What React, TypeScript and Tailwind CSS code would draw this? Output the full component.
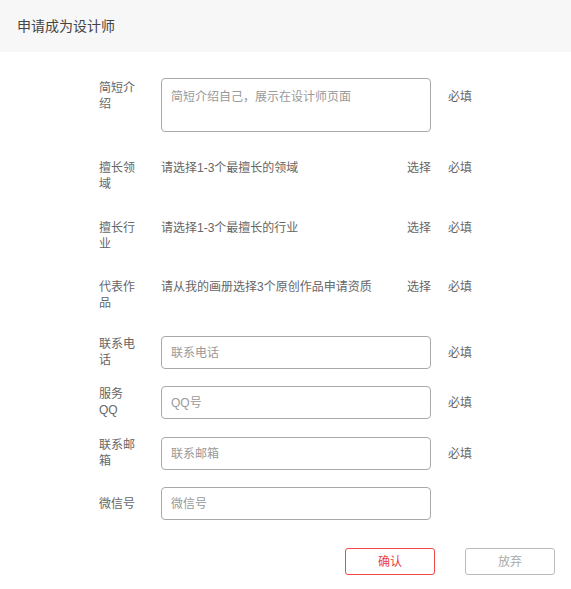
import React from "react";

const font = { fontFamily: '"Liberation Sans", "Noto Sans CJK SC", sans-serif' };

function Label({ children }: { children: React.ReactNode }) {
  return (
    <div className="w-[40px] mr-[22px] shrink-0 text-[12px] leading-[16px] text-[#666] break-words">
      {children}
    </div>
  );
}

function Required() {
  return <div className="ml-[17px] text-[12px] leading-[16px] text-[#666]">必填</div>;
}

function InputRow({ label, placeholder, required, mt, center }: { label: React.ReactNode; placeholder: string; required?: boolean; mt: string; center?: boolean }) {
  return (
    <div className={`flex ${center ? "items-center" : "items-start"} ${mt}`}>
      <Label>{label}</Label>
      <div className="flex items-center">
        <input
          className="w-[270px] h-[33px] border border-[#aaa] rounded-[4px] px-[9px] text-[12px] text-[#333] placeholder:text-[#999] outline-none"
          placeholder={placeholder}
        />
        {required ? <Required /> : null}
      </div>
    </div>
  );
}

function SelectRow({ label, text, mt }: { label: React.ReactNode; text: string; mt: string }) {
  return (
    <div className={`flex items-start ${mt}`}>
      <Label>{label}</Label>
      <div className="w-[270px] flex justify-between text-[12px] leading-[16px] text-[#666]">
        <span>{text}</span>
        <span>选择</span>
      </div>
      <Required />
    </div>
  );
}

export default function App() {
  return (
    <div className="w-[571px] h-[589px] bg-white" style={font}>
      <div className="h-[52px] bg-[#f7f7f7] flex items-center pl-[17px] text-[14px] text-[#444]">
        申请成为设计师
      </div>
      <div className="pl-[99px] pt-[26px]">
        <div className="flex items-start">
          <div className="pt-[2px]">
            <Label>简短介绍</Label>
          </div>
          <textarea
            className="w-[270px] h-[54px] border border-[#aaa] rounded-[4px] pt-[10px] px-[9px] text-[12px] leading-[16px] text-[#333] placeholder:text-[#999] outline-none resize-none"
            placeholder="简短介绍自己，展示在设计师页面"
          />
          <div className="mt-[11px]">
            <Required />
          </div>
        </div>
        <SelectRow mt="mt-[28px]" label="擅长领域" text="请选择1-3个最擅长的领域" />
        <SelectRow mt="mt-[28px]" label="擅长行业" text="请选择1-3个最擅长的行业" />
        <SelectRow mt="mt-[27px]" label="代表作品" text="请从我的画册选择3个原创作品申请资质" />
        <InputRow mt="mt-[25px]" label="联系电话" placeholder="联系电话" required />
        <InputRow mt="mt-[17px]" label="服务 QQ" placeholder="QQ号" required />
        <InputRow mt="mt-[18px]" label="联系邮箱" placeholder="联系邮箱" required />
        <InputRow mt="mt-[17px]" label="微信号" placeholder="微信号" center />
      </div>
      <div className="flex justify-end gap-[30px] pr-[16px] mt-[28px]">
        <button className="w-[90px] h-[27px] border border-[#f04848] rounded-[3px] text-[12px] text-[#e84040] bg-white">
          确认
        </button>
        <button className="w-[90px] h-[27px] border border-[#bbb] rounded-[3px] text-[12px] text-[#aaa] bg-white">
          放弃
        </button>
      </div>
    </div>
  );
}
